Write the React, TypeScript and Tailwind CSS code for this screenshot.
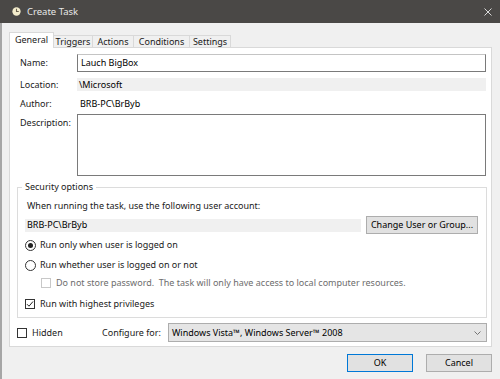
import React from 'react';

const Radio = ({ checked }: { checked?: boolean }) => (
  <span className="w-[11px] h-[11px] rounded-full border border-[#333] bg-white flex items-center justify-center shrink-0">
    {checked && <span className="w-[5px] h-[5px] rounded-full bg-[#222]" />}
  </span>
);

const Check = ({ checked, disabled }: { checked?: boolean; disabled?: boolean }) => (
  <span
    className={`w-[10px] h-[10px] border bg-white flex items-center justify-center shrink-0 ${
      disabled ? 'border-[#c8c8c8]' : 'border-[#333]'
    }`}
  >
    {checked && (
      <svg width="8" height="8" viewBox="0 0 8 8">
        <path d="M1 4.2 L3 6.2 L7 1.5" fill="none" stroke="#222" strokeWidth="1" />
      </svg>
    )}
  </span>
);

const tabs = [
  { label: 'General', w: 'w-[45px]' },
  { label: 'Triggers', w: 'w-[39px]' },
  { label: 'Actions', w: 'w-[41px]' },
  { label: 'Conditions', w: 'w-[56px]' },
  { label: 'Settings', w: 'w-[41px]' },
];

export default function App() {
  return (
    <div
      className="w-[500px] h-[379px] bg-[#f0f0f0] flex flex-col text-[9px] text-[#1a1a1a] leading-[14px] overflow-hidden"
      style={{ fontFamily: '"Noto Sans", "Open Sans", sans-serif' }}
    >
      {/* title bar */}
      <div className="h-[23px] bg-[#4a4846] flex items-center pl-[12px] pr-[8px] shrink-0">
        <svg width="9" height="9" viewBox="0 0 10 10">
          <circle cx="5" cy="5" r="4.6" fill="#f3eccc" />
          <path d="M5 2 V5 H7.5" fill="none" stroke="#6b6250" strokeWidth="1.2" />
        </svg>
        <span className="ml-[6px] text-[#e8e8e8] text-[9.5px]">Create Task</span>
        <svg className="ml-auto" width="8" height="8" viewBox="0 0 8 8">
          <path d="M0.5 0.5 L7.5 7.5 M7.5 0.5 L0.5 7.5" stroke="#d8d8d8" strokeWidth="1" />
        </svg>
      </div>

      <div className="flex-1 border-l-[2px] border-[#a6a6a6] flex flex-col pl-[7px] pr-[8px]">
        {/* tabs */}
        <div className="flex items-end h-[24px] relative z-10">
          {tabs.map((t, i) =>
            i === 0 ? (
              <div
                key={t.label}
                className={`${t.w} h-[16px] bg-white border border-b-0 border-[#d9d9d9] flex items-center justify-center mb-[-1px] pb-[1px]`}
              >
                {t.label}
              </div>
            ) : (
              <div
                key={t.label}
                className={`${t.w} h-[12px] border border-b-0 border-l-0 border-[#d9d9d9] flex items-center justify-center`}
              >
                {t.label}
              </div>
            )
          )}
        </div>

        {/* panel */}
        <div className="h-[300px] bg-white border border-[#d9d9d9] pt-[6px] pl-[10px] pr-[5px] flex flex-col">
          <div className="flex items-center h-[18px]">
            <span className="w-[57px]">Name:</span>
            <div className="flex-1 h-[18px] border border-[#7a7a7a] border-t-[#c4c4c4] flex items-center pl-[3px] text-black">
              Lauch BigBox
            </div>
          </div>
          <div className="flex items-center h-[13px] mt-[6px]">
            <span className="w-[57px] mt-[1px]">Location:</span>
            <div className="flex-1 h-[13px] bg-[#f0f0f0] flex items-center pl-[2px] text-black">
              \Microsoft
            </div>
          </div>
          <div className="flex items-center h-[14px] mt-[6px]">
            <span className="w-[57px]">Author:</span>
            <span className="pl-[3px] text-black">BRB-PC\BrByb</span>
          </div>
          <div className="flex h-[62px] mt-[3px]">
            <span className="w-[57px] pt-[2px]">Description:</span>
            <div className="flex-1 border border-[#7a7a7a] bg-white" />
          </div>

          {/* security options */}
          <fieldset className="mt-[4px] mr-[-1px] ml-[-3px] border border-[#dcdcdc] h-[138px] pl-[7px] pr-[8px]">
            <legend className="ml-[-3px] px-[3px] leading-[14px]">Security options</legend>
            <div className="pl-[2px] mt-[5px]">When running the task, use the following user account:</div>
            <div className="flex items-center mt-[3px]">
              <div className="w-[336px] h-[13px] bg-[#f0f0f0] flex items-center pl-[2px] text-black">
                BRB-PC\BrByb
              </div>
              <div className="ml-auto w-[112px] h-[18px] bg-[#e1e1e1] border border-[#adadad] flex items-center justify-center text-black">
                Change User or Group...
              </div>
            </div>
            <div className="flex items-center h-[14px] mt-[4px] gap-[4px]">
              <Radio checked />
              <span>Run only when user is logged on</span>
            </div>
            <div className="flex items-center h-[14px] mt-[6px] gap-[4px]">
              <Radio />
              <span>Run whether user is logged on or not</span>
            </div>
            <div className="flex items-center h-[14px] mt-[4px] ml-[16px] gap-[5px]">
              <Check disabled />
              <span className="text-[#6d6d6d]">
                Do not store password.&nbsp; The task will only have access to local computer resources.
              </span>
            </div>
            <div className="flex items-center h-[14px] mt-[7px] gap-[5px]">
              <Check checked />
              <span>Run with highest privileges</span>
            </div>
          </fieldset>

          <div className="flex items-center h-[19px] mt-[5px] ml-[-3px] mr-[-1px]">
            <Check />
            <span className="ml-[5px] w-[70px]">Hidden</span>
            <span className="w-[66px]">Configure for:</span>
            <div className="flex-1 h-[19px] bg-[#e5e5e5] border border-[#adadad] flex items-center pl-[3px] pr-[5px] text-black">
              <span>Windows Vista™, Windows Server™ 2008</span>
              <svg className="ml-auto" width="7" height="4" viewBox="0 0 7 4">
                <path d="M0.5 0.5 L3.5 3.5 L6.5 0.5" fill="none" stroke="#666" strokeWidth="0.9" />
              </svg>
            </div>
          </div>
        </div>

        {/* footer buttons */}
        <div className="flex justify-end gap-[13px] mt-[7px]">
          <div className="w-[66px] h-[18px] bg-[#e1e1e1] border-[1.5px] border-[#0078d7] flex items-center justify-center text-black">
            OK
          </div>
          <div className="w-[66px] h-[18px] bg-[#e1e1e1] border border-[#adadad] flex items-center justify-center text-black">
            Cancel
          </div>
        </div>
      </div>
    </div>
  );
}
